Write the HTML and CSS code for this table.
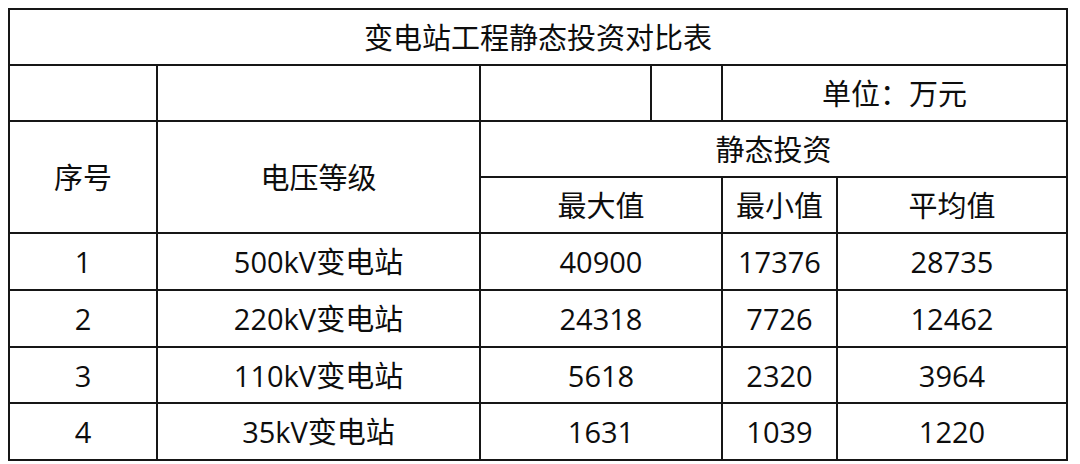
FILE: index.html
```html
<!DOCTYPE html>
<html lang="zh-CN">
<head>
<meta charset="utf-8">
<title>变电站工程静态投资对比表</title>
<link rel="stylesheet" href="styles.css">
</head>
<body>
<div class="sheet">
  <div class="cell span-all">变电站工程静态投资对比表</div>

  <div class="cell"></div>
  <div class="cell"></div>
  <div class="cell"></div>
  <div class="cell"></div>
  <div class="cell span-unit">单位：万元</div>

  <div class="cell span-rows">序号</div>
  <div class="cell span-rows">电压等级</div>
  <div class="cell span-invest">静态投资</div>
  <div class="cell span-max">最大值</div>
  <div class="cell">最小值</div>
  <div class="cell">平均值</div>

  <div class="cell">1</div>
  <div class="cell">500kV变电站</div>
  <div class="cell span-max">40900</div>
  <div class="cell">17376</div>
  <div class="cell">28735</div>

  <div class="cell">2</div>
  <div class="cell">220kV变电站</div>
  <div class="cell span-max">24318</div>
  <div class="cell">7726</div>
  <div class="cell">12462</div>

  <div class="cell">3</div>
  <div class="cell">110kV变电站</div>
  <div class="cell span-max">5618</div>
  <div class="cell">2320</div>
  <div class="cell">3964</div>

  <div class="cell">4</div>
  <div class="cell">35kV变电站</div>
  <div class="cell span-max">1631</div>
  <div class="cell">1039</div>
  <div class="cell">1220</div>
</div>
</body>
</html>
```

FILE: styles.css
```css
html, body {
  margin: 0;
  padding: 0;
  background: #ffffff;
}

body {
  padding: 8px;
  font-family: "Open Sans", "Noto Sans CJK SC", sans-serif;
  font-size: 29px;
  color: #0d0d0d;
}

.sheet {
  display: grid;
  grid-template-columns: 148px 323px 171px 71px 115px 230px;
  grid-template-rows: 56px 56px 56px 56px 57px 57px 56px 57px;
  width: max-content;
  border-top: 2px solid #161616;
  border-left: 2px solid #161616;
}

.cell {
  box-sizing: border-box;
  border-right: 2px solid #161616;
  border-bottom: 2px solid #161616;
  display: flex;
  align-items: center;
  justify-content: center;
  line-height: 1;
  white-space: nowrap;
}

.span-all {
  grid-column: 1 / span 6;
}

.span-unit {
  grid-column: 5 / span 2;
}

.span-rows {
  grid-row: span 2;
}

.span-invest {
  grid-column: 3 / span 4;
}

.span-max {
  grid-column: span 2;
}
```
